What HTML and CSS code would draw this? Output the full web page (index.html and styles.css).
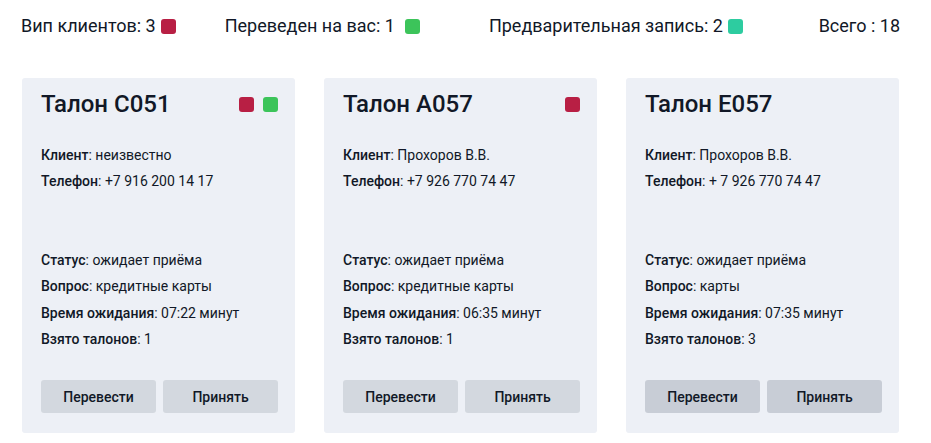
FILE: index.html
```html
<!DOCTYPE html>
<html lang="ru">
<head>
    <meta charset="UTF-8">
    <meta name="viewport" content="width=device-width, initial-scale=1.0">
    <title>Талоны</title>
    <link rel="stylesheet" href="styles.css">
</head>
<body>
    <div class="page">
        <!-- Сводка по очереди -->
        <header class="summary">
            <div class="summary-item vip">Вип клиентов: 3 <span class="mark mark-red"></span></div>
            <div class="summary-item moved">Переведен на вас: 1 <span class="mark mark-green"></span></div>
            <div class="summary-item pre">Предварительная запись: 2 <span class="mark mark-teal"></span></div>
            <div class="summary-item total">Всего : 18</div>
        </header>

        <main class="tickets">
            <div class="ticket">
                <div class="ticket-head">
                    <h2>Талон C051</h2>
                    <div class="marks">
                        <span class="mark mark-red"></span>
                        <span class="mark mark-green"></span>
                    </div>
                </div>
                <div class="ticket-client">
                    <p><b>Клиент</b>: неизвестно</p>
                    <p><b>Телефон</b>: +7 916 200 14 17</p>
                </div>
                <div class="ticket-info">
                    <p><b>Статус</b>: ожидает приёма</p>
                    <p><b>Вопрос</b>: кредитные карты</p>
                    <p><b>Время ожидания</b>: 07:22 минут</p>
                    <p><b>Взято талонов</b>: 1</p>
                </div>
                <div class="ticket-actions">
                    <button class="btn">Перевести</button>
                    <button class="btn">Принять</button>
                </div>
            </div>

            <div class="ticket">
                <div class="ticket-head">
                    <h2>Талон A057</h2>
                    <div class="marks">
                        <span class="mark mark-red"></span>
                    </div>
                </div>
                <div class="ticket-client">
                    <p><b>Клиент</b>: Прохоров В.В.</p>
                    <p><b>Телефон</b>: +7 926 770 74 47</p>
                </div>
                <div class="ticket-info">
                    <p><b>Статус</b>: ожидает приёма</p>
                    <p><b>Вопрос</b>: кредитные карты</p>
                    <p><b>Время ожидания</b>: 06:35 минут</p>
                    <p><b>Взято талонов</b>: 1</p>
                </div>
                <div class="ticket-actions">
                    <button class="btn">Перевести</button>
                    <button class="btn">Принять</button>
                </div>
            </div>

            <div class="ticket ticket-dark">
                <div class="ticket-head">
                    <h2>Талон E057</h2>
                </div>
                <div class="ticket-client">
                    <p><b>Клиент</b>: Прохоров В.В.</p>
                    <p><b>Телефон</b>: + 7 926 770 74 47</p>
                </div>
                <div class="ticket-info">
                    <p><b>Статус</b>: ожидает приёма</p>
                    <p><b>Вопрос</b>: карты</p>
                    <p><b>Время ожидания</b>: 07:35 минут</p>
                    <p><b>Взято талонов</b>: 3</p>
                </div>
                <div class="ticket-actions">
                    <button class="btn">Перевести</button>
                    <button class="btn">Принять</button>
                </div>
            </div>
        </main>
    </div>
</body>
</html>
```

FILE: styles.css
```css
/* Общие стили */
body {
    margin: 0;
    font-family: Roboto, "Liberation Sans", sans-serif;
    background: #ffffff;
    color: #111827;
}

.page {
    padding: 14px 31px 0 21px;
}

/* Сводка */
.summary {
    display: flex;
    align-items: center;
    font-size: 18px;
    line-height: 24px;
}

.summary-item {
    display: flex;
    align-items: center;
    gap: 5px;
    white-space: nowrap;
}

.summary-item.vip { margin-right: 49px; }
.summary-item.moved { margin-right: 69px; }
.summary-item.moved .mark { margin-left: 5px; }
.summary-item.total { margin-left: auto; }

.mark {
    display: inline-block;
    width: 15px;
    height: 15px;
    border-radius: 3px;
}

.mark-red { background: #b81f44; }
.mark-green { background: #3cc45a; }
.mark-teal { background: #2dcca0; }

/* Карточки талонов */
.tickets {
    display: flex;
    gap: 29px;
    margin-top: 40px;
    padding-left: 1px;
}

.ticket {
    width: 273px;
    box-sizing: border-box;
    background: #edf0f6;
    border-radius: 3px;
    padding: 11px 17px 20px 19px;
}

.ticket-head {
    display: flex;
    align-items: center;
    justify-content: space-between;
    height: 30px;
}

.ticket-head h2 {
    margin: 0;
    font-size: 24px;
    font-weight: 500;
}

.marks {
    display: flex;
    gap: 9px;
}

.ticket p {
    margin: 0;
    font-size: 14px;
    line-height: 26.3px;
}

.ticket b {
    font-weight: 500;
}

.ticket-client {
    margin-top: 23px;
    height: 105px;
}

.ticket-info {
    margin-bottom: 28px;
}

.ticket-actions {
    display: flex;
    gap: 7px;
}

.btn {
    flex: 1;
    height: 33px;
    border: none;
    border-radius: 3px;
    background: #d3d8df;
    color: #111827;
    font-family: Roboto, "Liberation Sans", sans-serif;
    font-size: 14px;
    font-weight: 500;
    cursor: pointer;
}

.ticket-dark .btn {
    background: #c8cdd6;
}
```
